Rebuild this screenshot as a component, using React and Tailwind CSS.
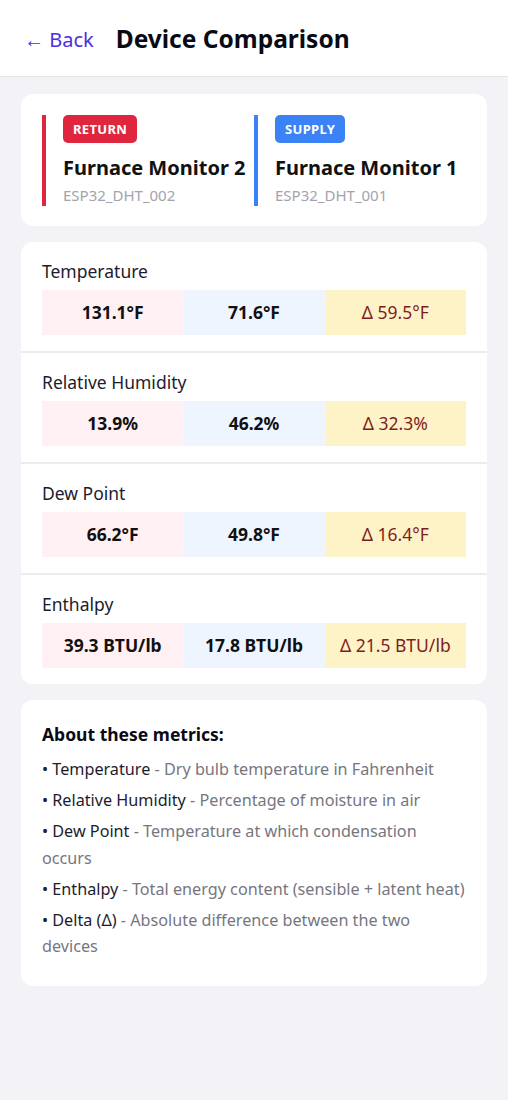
import React from 'react';

const metrics = [
  { label: 'Temperature', a: '131.1°F', b: '71.6°F', d: 'Δ 59.5°F' },
  { label: 'Relative Humidity', a: '13.9%', b: '46.2%', d: 'Δ 32.3%' },
  { label: 'Dew Point', a: '66.2°F', b: '49.8°F', d: 'Δ 16.4°F' },
  { label: 'Enthalpy', a: '39.3 BTU/lb', b: '17.8 BTU/lb', d: 'Δ 21.5 BTU/lb' },
];

const notes = [
  ['Temperature', 'Dry bulb temperature in Fahrenheit'],
  ['Relative Humidity', 'Percentage of moisture in air'],
  ['Dew Point', 'Temperature at which condensation occurs'],
  ['Enthalpy', 'Total energy content (sensible + latent heat)'],
  ['Delta (Δ)', 'Absolute difference between the two devices'],
];

const DeviceCol = ({ tag, tagColor, barColor, name, id }) => (
  <div className="flex-1 flex">
    <div className={`w-1 ${barColor}`}></div>
    <div className="pl-[17px]">
      <span className={`inline-block ${tagColor} text-white text-[13px] font-bold tracking-wide rounded-[5px] px-[10px] leading-[28px] h-7`}>
        {tag}
      </span>
      <div className="text-[20px] font-bold text-[#111] mt-[11px] leading-[28px]">{name}</div>
      <div className="text-[15px] text-[#a3a3ad] leading-[22px] mt-[2px]">{id}</div>
    </div>
  </div>
);

export default function App() {
  return (
    <div className="min-h-[1100px] bg-[#f2f2f7] font-['Noto_Sans',sans-serif]">
      {/* header */}
      <div className="bg-white h-[77px] border-b border-[#e3e3e8] flex items-center pt-[3px] px-[24px] gap-[22px]">
        <span className="text-[#4a2fe0] text-[20px]">← Back</span>
        <h1 className="text-[24.5px] font-bold text-[#0a0a14]">Device Comparison</h1>
      </div>

      <div className="px-[21px] pt-[17px] flex flex-col gap-[16px]">
        {/* devices */}
        <div className="bg-white rounded-[12px] px-[21px] pt-[21px] pb-[20px] flex">
          <DeviceCol tag="RETURN" tagColor="bg-[#e0263f]" barColor="bg-[#e0263f]" name="Furnace Monitor 2" id="ESP32_DHT_002" />
          <DeviceCol tag="SUPPLY" tagColor="bg-[#3b82f6]" barColor="bg-[#3b82f6]" name="Furnace Monitor 1" id="ESP32_DHT_001" />
        </div>

        {/* metrics */}
        <div className="bg-white rounded-[12px] overflow-hidden">
          {metrics.map((m, i) => (
            <div key={m.label} className={`px-[21px] pt-[17px] pb-[16px] ${i < metrics.length - 1 ? 'border-b-2 border-[#ebebf0]' : ''}`}>
              <div className="text-[17.5px] text-[#1c1c2e] leading-[24px] mb-[7px]">{m.label}</div>
              <div className="grid grid-cols-3 h-[45px] text-[17.5px]">
                <div className="bg-[#fff0f4] flex items-center justify-center font-bold text-[#111]">{m.a}</div>
                <div className="bg-[#eff5ff] flex items-center justify-center font-bold text-[#111]">{m.b}</div>
                <div className="bg-[#fef3c7] flex items-center justify-center text-[#7f1d1d]">{m.d}</div>
              </div>
            </div>
          ))}
        </div>

        {/* about */}
        <div className="bg-white rounded-[12px] px-[21px] pt-[21px] pb-[26px]">
          <div className="text-[17.5px] font-bold text-[#0a0a14] leading-[26px] mb-[9px]">About these metrics:</div>
          <ul className="flex flex-col gap-[4.5px]">
            {notes.map(([k, v]) => (
              <li key={k} className="text-[16.2px] leading-[26.5px] text-[#76767f]">
                <span className="text-[#1c1c2e]">• {k}</span> - {v}
              </li>
            ))}
          </ul>
        </div>
      </div>
    </div>
  );
}
